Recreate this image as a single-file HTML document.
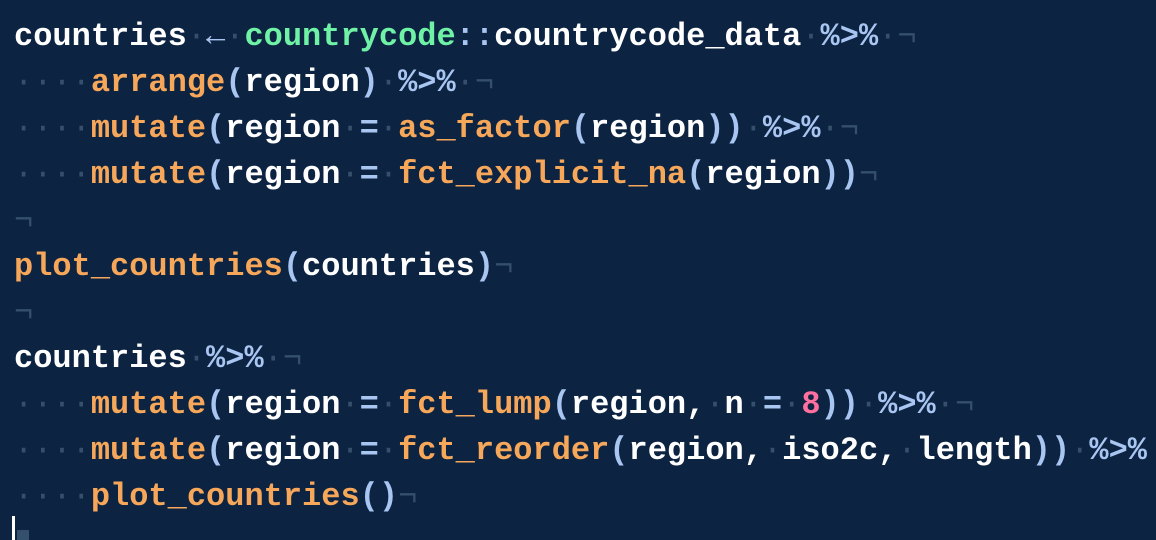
<!DOCTYPE html>
<html><head><style>
html,body{margin:0;padding:0;background:#0c2341;width:1156px;height:540px;overflow:hidden}
pre{margin:0;position:absolute;left:14px;top:14px;font-family:"Liberation Mono",monospace;font-size:32px;line-height:46px;color:#fff;font-weight:bold;letter-spacing:0}
.d{color:#34506d;font-weight:normal}
.o{color:#f7a75a}
.g{color:#6ff2a6}
.b{color:#a9c6f2}
.p{color:#ff6fa0}
.cur{position:absolute;left:12px;top:516px;width:3px;height:24px;background:#fff}
.blk{position:absolute;left:17px;top:530px;width:12px;height:10px;background:#34506d}
</style></head><body>
<pre>countries<span class="d">·</span><span class="b">←</span><span class="d">·</span><span class="g">countrycode</span><span class="b">::</span>countrycode_data<span class="d">·</span><span class="b">%&gt;%</span><span class="d">·¬</span>
<span class="d">····</span><span class="o">arrange</span><span class="b">(</span>region<span class="b">)</span><span class="d">·</span><span class="b">%&gt;%</span><span class="d">·¬</span>
<span class="d">····</span><span class="o">mutate</span><span class="b">(</span>region<span class="d">·</span><span class="b">=</span><span class="d">·</span><span class="o">as_factor</span><span class="b">(</span>region<span class="b">))</span><span class="d">·</span><span class="b">%&gt;%</span><span class="d">·¬</span>
<span class="d">····</span><span class="o">mutate</span><span class="b">(</span>region<span class="d">·</span><span class="b">=</span><span class="d">·</span><span class="o">fct_explicit_na</span><span class="b">(</span>region<span class="b">))</span><span class="d">¬</span>
<span class="d">¬</span>
<span class="o">plot_countries</span><span class="b">(</span>countries<span class="b">)</span><span class="d">¬</span>
<span class="d">¬</span>
countries<span class="d">·</span><span class="b">%&gt;%</span><span class="d">·¬</span>
<span class="d">····</span><span class="o">mutate</span><span class="b">(</span>region<span class="d">·</span><span class="b">=</span><span class="d">·</span><span class="o">fct_lump</span><span class="b">(</span>region,<span class="d">·</span>n<span class="d">·</span><span class="b">=</span><span class="d">·</span><span class="p">8</span><span class="b">))</span><span class="d">·</span><span class="b">%&gt;%</span><span class="d">·¬</span>
<span class="d">····</span><span class="o">mutate</span><span class="b">(</span>region<span class="d">·</span><span class="b">=</span><span class="d">·</span><span class="o">fct_reorder</span><span class="b">(</span>region,<span class="d">·</span>iso2c,<span class="d">·</span>length<span class="b">))</span><span class="d">·</span><span class="b">%&gt;%</span>
<span class="d">····</span><span class="o">plot_countries</span><span class="b">()</span><span class="d">¬</span></pre>
<div class="blk"></div><div class="cur"></div>
</body></html>
